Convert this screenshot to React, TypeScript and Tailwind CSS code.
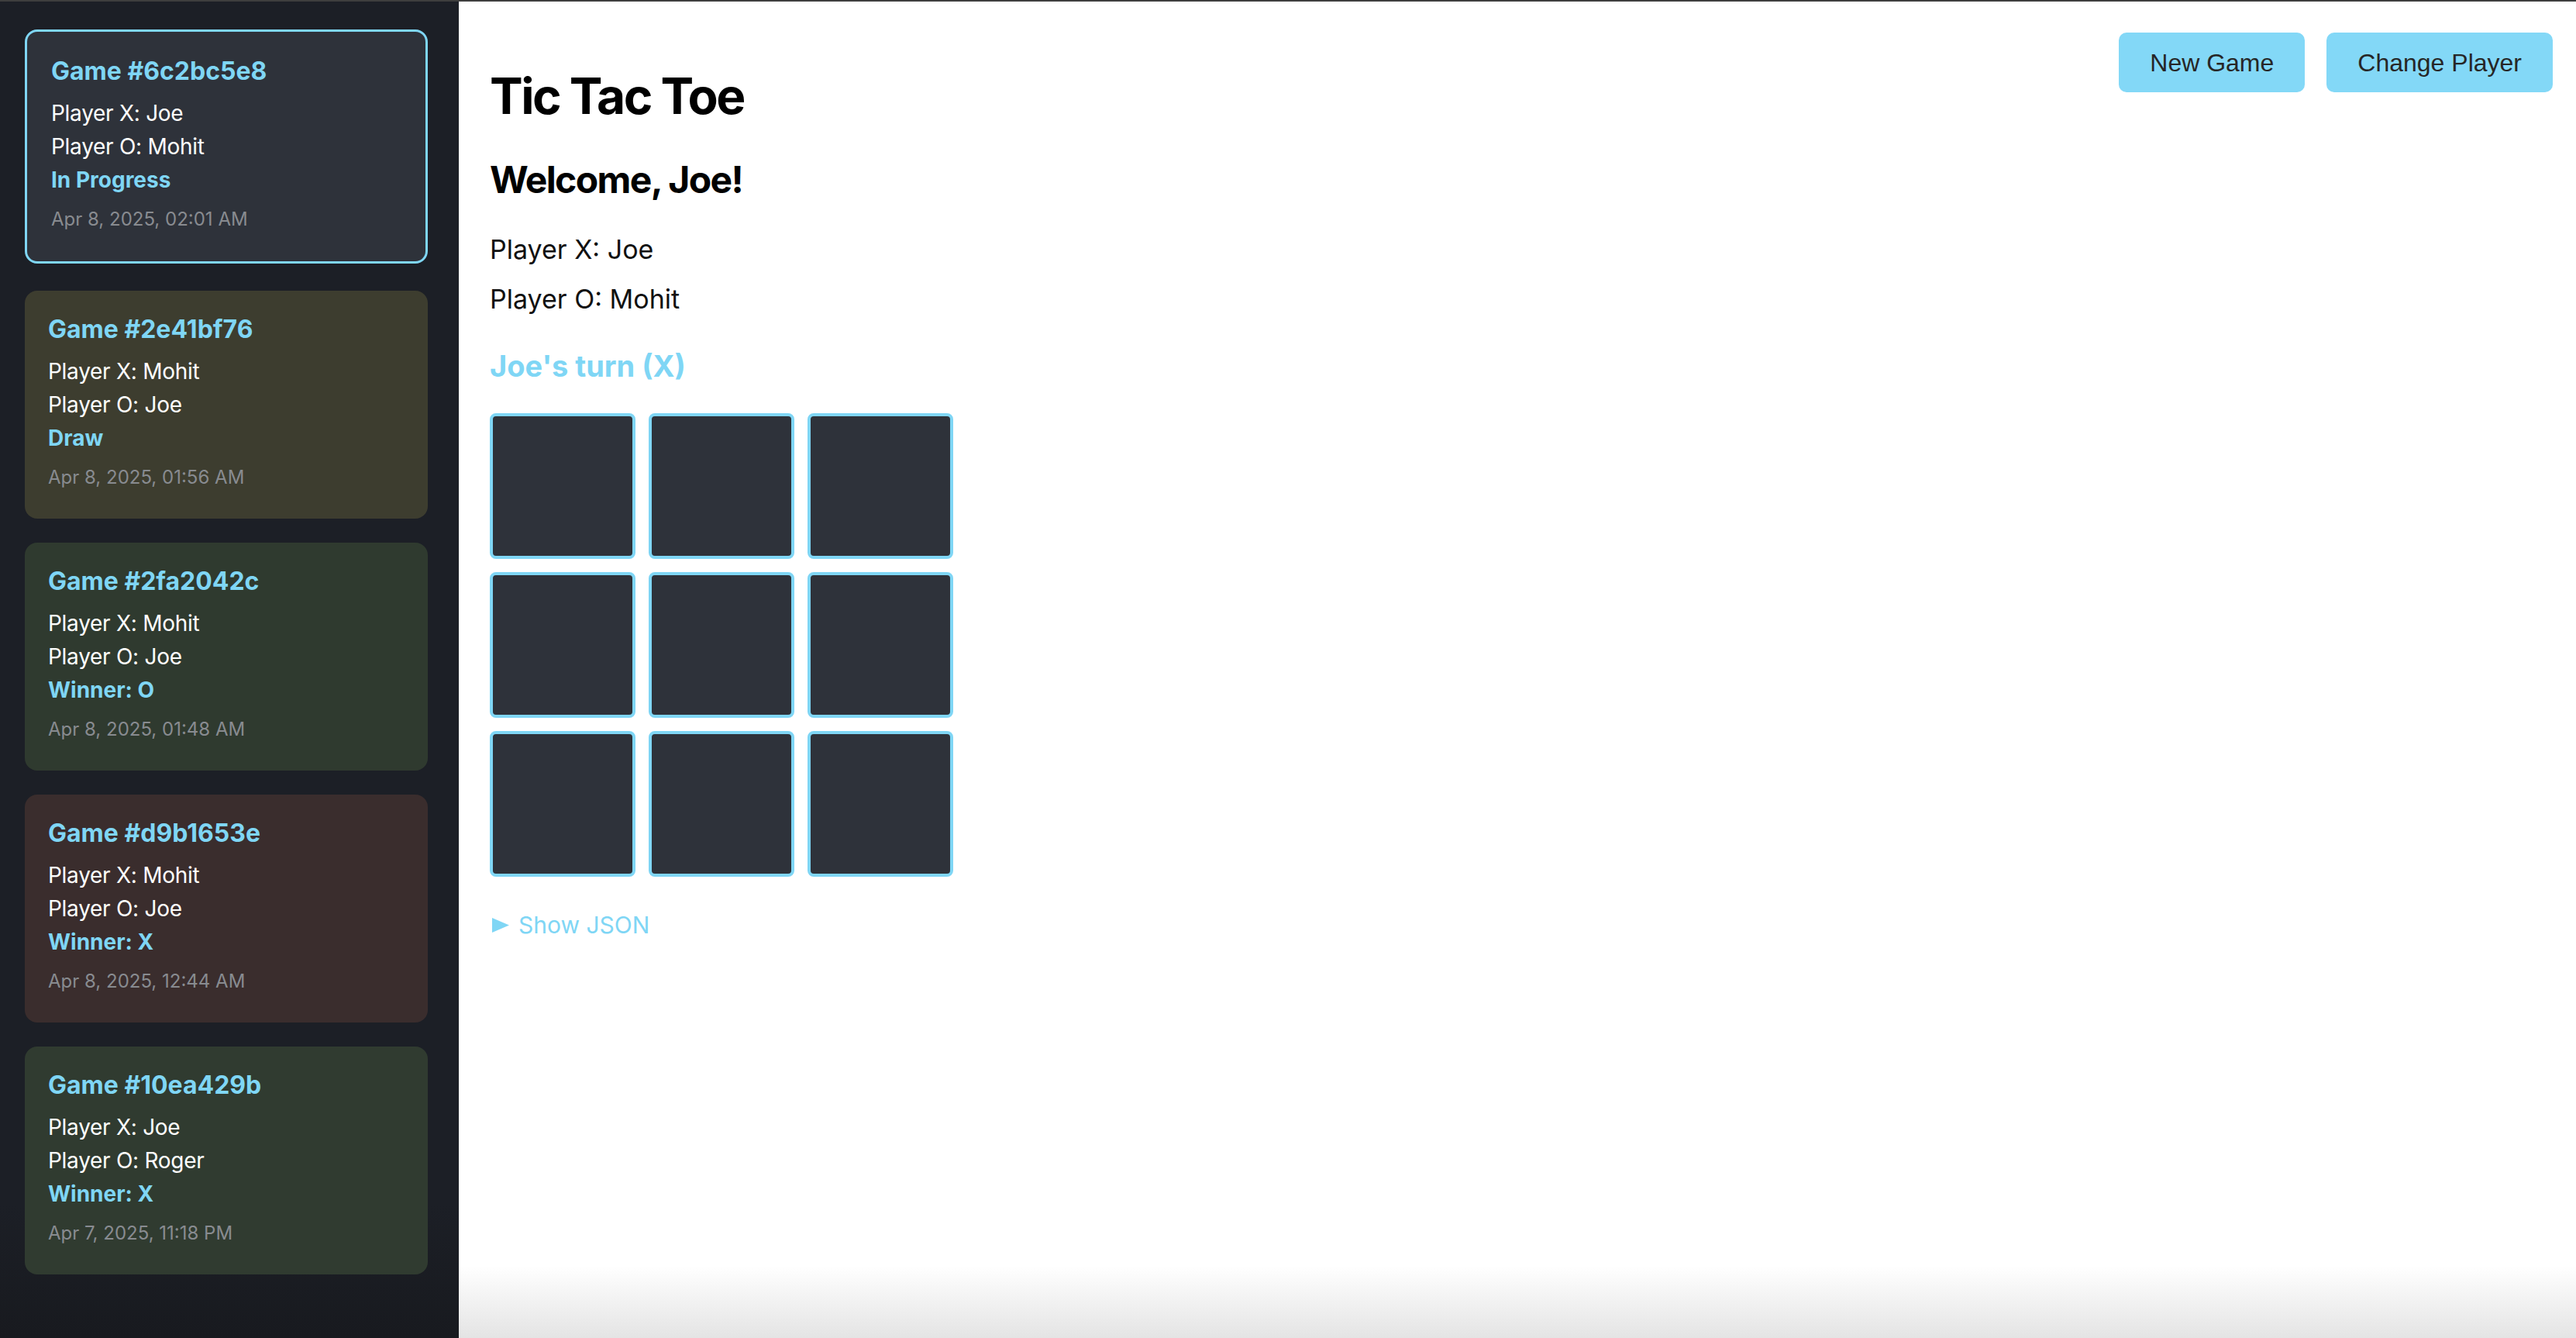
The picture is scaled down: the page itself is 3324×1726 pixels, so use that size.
import React from "react";

type Game = {
  id: string;
  x: string;
  o: string;
  status: string;
  date: string;
  bg: string;
  active?: boolean;
};

const games: Game[] = [
  { id: "6c2bc5e8", x: "Joe", o: "Mohit", status: "In Progress", date: "Apr 8, 2025, 02:01 AM", bg: "bg-[#2e323a]", active: true },
  { id: "2e41bf76", x: "Mohit", o: "Joe", status: "Draw", date: "Apr 8, 2025, 01:56 AM", bg: "bg-[#3d3d2f]" },
  { id: "2fa2042c", x: "Mohit", o: "Joe", status: "Winner: O", date: "Apr 8, 2025, 01:48 AM", bg: "bg-[#2f3a2f]" },
  { id: "d9b1653e", x: "Mohit", o: "Joe", status: "Winner: X", date: "Apr 8, 2025, 12:44 AM", bg: "bg-[#3a2d2d]" },
  { id: "10ea429b", x: "Joe", o: "Roger", status: "Winner: X", date: "Apr 7, 2025, 11:18 PM", bg: "bg-[#303b30]" },
];

function GameCard({ g }: { g: Game }) {
  return (
    <div
      className={
        g.active
          ? `${g.bg} rounded-[16px] border-[3px] border-[#7fd6f5] px-[31px] pt-[35px] pb-[42px] mb-[35px]`
          : `${g.bg} rounded-[16px] px-[30px] pt-[34px] pb-[41px] mb-[31px]`
      }
    >
      <div className="text-[32px] leading-[32px] font-bold text-[#7fd6f5]">Game #{g.id}</div>
      <div className="mt-[17px] text-[28px] leading-[43px] text-white tracking-[-0.01em]">Player X: {g.x}</div>
      <div className="text-[28px] leading-[43px] text-white tracking-[-0.01em]">Player O: {g.o}</div>
      <div className="text-[28px] leading-[43px] font-bold text-[#7fd6f5]">{g.status}</div>
      <div className="mt-[17px] text-[24px] leading-[24px] text-[#888b90]">{g.date}</div>
    </div>
  );
}

export default function App() {
  return (
    <div
      className="w-[3324px] h-[1726px] flex flex-col overflow-hidden"
      style={{ fontFamily: "Inter, 'Noto Sans', sans-serif" }}
    >
      <div className="h-[2px] bg-[#3e3e3e] shrink-0" />
      <div className="flex flex-1 min-h-0">
        <aside className="w-[592px] shrink-0 bg-[linear-gradient(to_bottom,#1c1f26_90%,#181a1f)] pl-[32px] pr-[40px] pt-[36px]">
          {games.map((g) => (
            <GameCard key={g.id} g={g} />
          ))}
        </aside>
        <main className="flex-1 flex items-start pl-[40px] pr-[30px] pt-[40px] bg-[linear-gradient(to_bottom,#ffffff_94.6%,#e4e4e4)]">
          <div className="flex-1 pt-[50px]">
            <h1 className="text-[64px] leading-[64px] font-bold text-black tracking-[-0.04em]">Tic Tac Toe</h1>
            <h2 className="mt-[52px] text-[48px] leading-[48px] font-bold text-black tracking-[-0.034em]">Welcome, Joe!</h2>
            <p className="mt-[49px] text-[34px] leading-[34px] text-[#111]">Player X: Joe</p>
            <p className="mt-[30px] text-[34px] leading-[34px] text-[#111]">Player O: Mohit</p>
            <h3 className="mt-[50px] text-[38px] leading-[38px] font-bold text-[#7fd6f5]">Joe's turn (X)</h3>
            <div className="mt-[42px] grid grid-cols-[188px_188px_188px] gap-[17px]">
              {Array.from({ length: 9 }).map((_, i) => (
                <div
                  key={i}
                  className="w-[188px] h-[188px] rounded-[8px] border-[4px] border-[#7fd6f5] bg-[#2e323a]"
                />
              ))}
            </div>
            <div className="mt-[46px] flex items-center text-[30px] leading-[32px] text-[#7fd6f5]">
              <svg width="22" height="19" viewBox="0 0 22 19" className="ml-[3px] mr-[12px]">
                <polygon points="0,0 22,9.5 0,19" fill="#7fd6f5" />
              </svg>
              <span>Show JSON</span>
            </div>
          </div>
          <div className="flex gap-[28px]" style={{ fontFamily: "'Liberation Sans', Arial, sans-serif" }}>
            <button className="h-[77px] px-[40px] rounded-[10px] bg-[#83d8f7] text-[32px] text-[#262626]">
              New Game
            </button>
            <button className="h-[77px] px-[40px] rounded-[10px] bg-[#83d8f7] text-[32px] text-[#262626]">
              Change Player
            </button>
          </div>
        </main>
      </div>
    </div>
  );
}
